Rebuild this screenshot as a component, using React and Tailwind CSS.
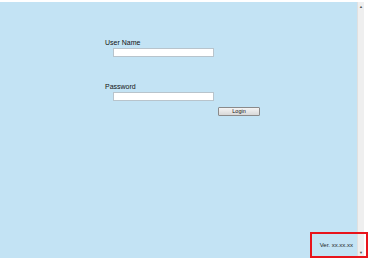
export default function App() {
  const font = { fontFamily: '"Liberation Sans", Arial, sans-serif' };
  return (
    <div className="relative w-[378px] h-[267px] bg-white" style={font}>
      <div className="flex pt-[2px] h-[258px]">
        <div className="w-[357px] h-full bg-[#c3e3f4] flex flex-col pl-[105px] pt-[36px]">
          <div className="text-[7px] leading-[9px] text-[#111]">User Name</div>
          <div className="ml-[8px] mt-[1px] w-[101px] h-[9px] bg-white border border-[#b8c4cc]"></div>
          <div className="mt-[25px] text-[7px] leading-[9px] text-[#111]">Password</div>
          <div className="ml-[8px] mt-[1px] w-[101px] h-[9px] bg-white border border-[#b8c4cc]"></div>
          <div className="ml-[113px] mt-[6px] w-[42px] h-[9px] bg-gradient-to-b from-[#f4f4f4] to-[#d8d8d8] border border-[#8a8a8a] rounded-[1px] flex items-center justify-center text-[5.5px] text-[#111]">Login</div>
          <div className="flex-1"></div>
          <div className="self-end mr-[4px] mb-[9px] text-[6px] leading-[7px] text-[#222]">Ver. xx.xx.xx</div>
        </div>
        <div className="w-[7px] h-full bg-[#efefef] border-l border-[#e0e0e0] flex flex-col items-center justify-between py-[3px]">
          <div className="text-[4px] leading-[4px] text-[#555]">▲</div>
          <div className="text-[4px] leading-[4px] text-[#555]">▼</div>
        </div>
      </div>
      <div className="absolute left-[310px] top-[232px] w-[58px] h-[26px] border-2 border-[#e8141b]"></div>
    </div>
  );
}
